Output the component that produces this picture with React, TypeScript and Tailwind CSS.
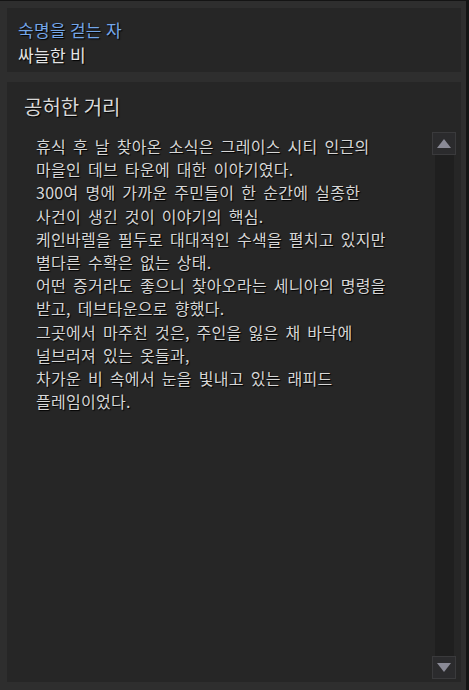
import React from 'react';

const lines = [
    "휴식 후 날 찾아온 소식은 그레이스 시티 인근의",
    "마을인 데브 타운에 대한 이야기였다.",
    "300여 명에 가까운 주민들이 한 순간에 실종한",
    "사건이 생긴 것이 이야기의 핵심.",
    "케인바렐을 필두로 대대적인 수색을 펼치고 있지만",
    "별다른 수확은 없는 상태.",
    "어떤 증거라도 좋으니 찾아오라는 세니아의 명령을",
    "받고, 데브타운으로 향했다.",
    "그곳에서 마주친 것은, 주인을 잃은 채 바닥에",
    "널브러져 있는 옷들과,",
    "차가운 비 속에서 눈을 빛내고 있는 래피드",
    "플레임이었다.",
];

function ScrollButton({ down }: { down?: boolean }) {
    return (
        <div className="w-[24px] h-[23px] shrink-0 bg-[#2b2b2d] border border-[#3a3a3c] flex items-center justify-center">
            <svg width="14" height="9" viewBox="0 0 14 9">
                {down ? (
                    <polygon points="0,0 14,0 7,9" fill="#8a8a96" />
                ) : (
                    <polygon points="7,0 14,9 0,9" fill="#8a8a96" />
                )}
            </svg>
        </div>
    );
}

export default function App() {
    return (
        <div
            className="w-[469px] h-[690px] bg-[#2e2e2e] border-r-[3px] border-t border-[#141414] flex flex-col pt-[7px] pl-[7px] pr-[5px] pb-[8px] gap-[10px] text-[#dcdcdc] [text-shadow:1px_1px_1px_#000]"
            style={{ fontFamily: '"Noto Sans CJK KR", "Noto Sans", sans-serif' }}
        >
            <div className="h-[64px] shrink-0 bg-[#262626] pl-[11px] pt-[9px] text-[17px] leading-[25px] tracking-[0.3px]">
                <div className="text-[#74a6e8]">숙명을 걷는 자</div>
                <div className="text-[#e4e4e4]">싸늘한 비</div>
            </div>

            <div className="flex-1 bg-[#262626] flex flex-col min-h-0">
                <h2 className="pl-[17px] pt-[11px] text-[20px] leading-[28px] text-[#d8d8d8]">공허한 거리</h2>
                <div className="flex-1 flex min-h-0 mt-[11px] mb-[3px]">
                    <div className="flex-1 pl-[29px] pt-[3px] text-[16px] leading-[23.2px] tracking-[0.3px] [word-spacing:3px] text-[#d6d6d6]">
                        {lines.map((l, i) => (
                            <p key={i} className="whitespace-nowrap">{l}</p>
                        ))}
                    </div>
                    <div className="w-[24px] mr-[5px] flex flex-col items-center">
                        <ScrollButton />
                        <div className="flex-1 w-[19px] bg-[#1f1f1f]" />
                        <ScrollButton down />
                    </div>
                </div>
            </div>
        </div>
    );
}
